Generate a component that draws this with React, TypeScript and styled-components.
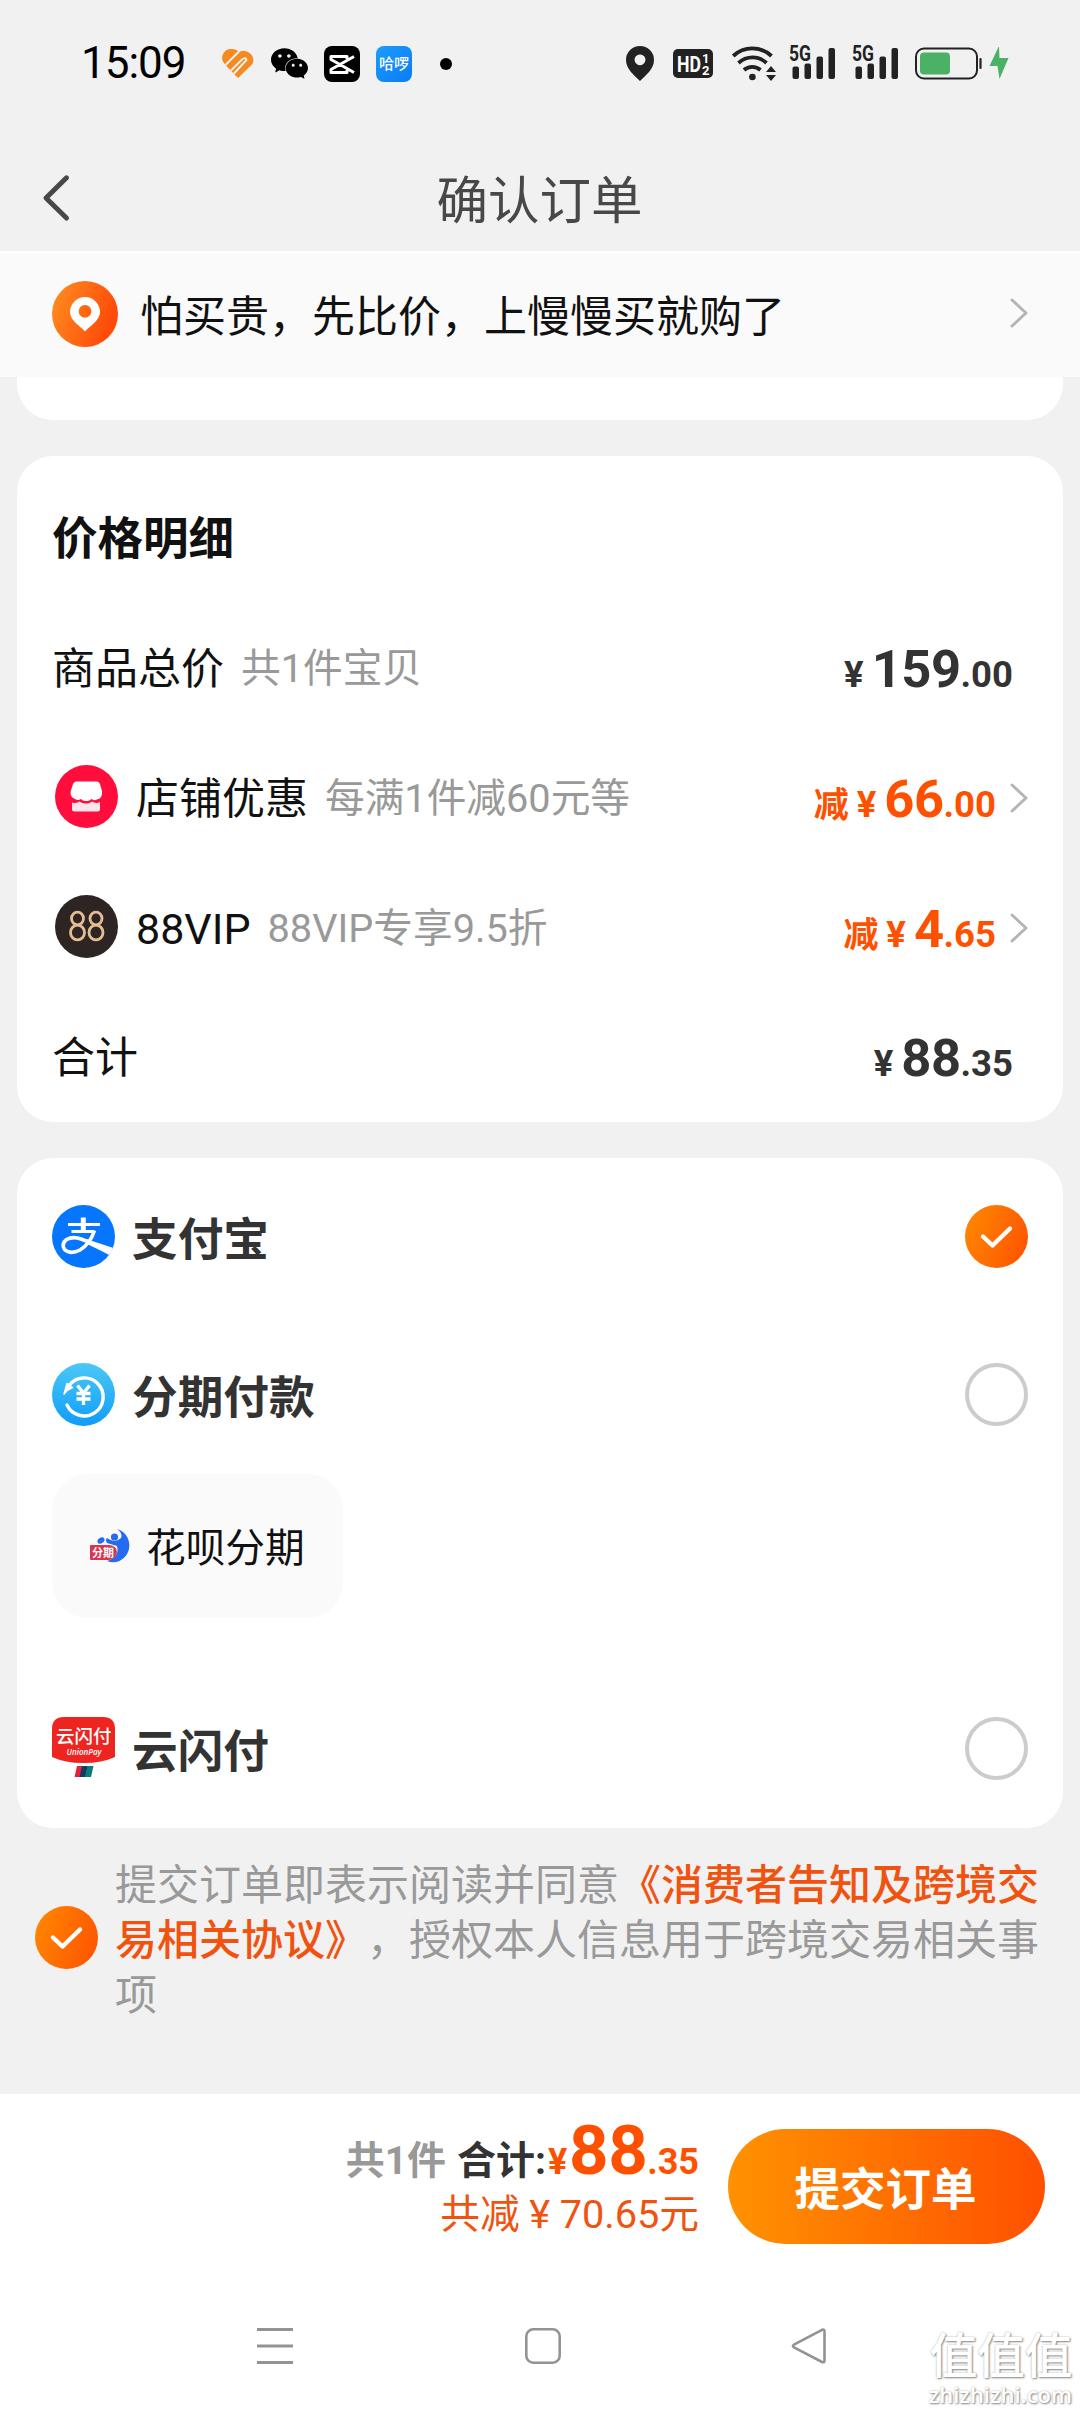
import React from "react";
import styled, { createGlobalStyle } from "styled-components";
import { SiWechat } from "react-icons/si";

const GlobalStyle = createGlobalStyle`
  * { box-sizing: border-box; }
  body {
    margin: 0;
    background: #f1f1f1;
    font-family: Roboto, "Noto Sans CJK SC", sans-serif;
    text-spacing-trim: space-all;
  }
  svg { display: block; flex: none; overflow: visible; }
`;

const Screen = styled.div`
  position: relative;
  display: flex;
  flex-direction: column;
  width: 1080px;
  height: 2412px;
  overflow: hidden;
  background: #f1f1f1;
`;

/* ---------- status bar ---------- */
const StatusBar = styled.header`
  display: flex;
  align-items: center;
  height: 129px;
  padding: 0 71px 2px 81px;
`;
const Clock = styled.span`
  width: 141px;
  padding-bottom: 1px;
  font-size: 44px;
  line-height: 50px;
  letter-spacing: -1px;
  color: #000;
`;
const StatusGroup = styled.div`
  display: flex;
  align-items: center;
  gap: 16px;
`;
const SignalGroup = styled(StatusGroup)`
  margin-left: -2px;
  gap: 17px;
`;
const RadioGroup = styled(StatusGroup)`
  gap: 19px;
`;
const Spacer = styled.div`
  flex: 1;
`;
const HelloBadge = styled.span`
  display: flex;
  align-items: center;
  justify-content: center;
  width: 36px;
  height: 36px;
  border-radius: 8px;
  background: linear-gradient(135deg, #1d9bfd, #0a7cf8);
  color: #fff;
  font-size: 15px;
  font-weight: 500;
  line-height: 20px;
`;
const Dot = styled.span`
  width: 12px;
  height: 12px;
  margin-left: 12px;
  border-radius: 50%;
  background: #000;
`;

/* ---------- navigation + banner ---------- */
const TitleBar = styled.div`
  display: flex;
  align-items: flex-start;
  height: 122px;
  padding: 0 42px;
`;
const PageTitle = styled.h1`
  flex: 1;
  margin: 0 29px 0 0;
  padding-top: 38px;
  text-align: center;
  font-size: 51.5px;
  font-weight: 400;
  line-height: 70px;
  color: #484848;
`;
const BackSlot = styled.div`
  display: flex;
  justify-content: center;
  width: 28px;
  padding-top: 46px;
`;
const Banner = styled.div`
  display: flex;
  align-items: center;
  height: 126px;
  padding: 0 52px 2px;
  border-top: 2px solid #fff;
  background: #fafafa;
`;
const BannerText = styled.span`
  flex: 1;
  padding: 6px 0 0 22px;
  font-size: 43px;
  line-height: 60px;
  color: #111;
`;

/* ---------- cards ---------- */
const CardTail = styled.div`
  height: 43px;
  margin: 0 17px 36px;
  border-radius: 0 0 36px 36px;
  background: #fff;
`;
const Card = styled.section`
  margin: 0 17px 36px;
  padding: 0 35px;
  border-radius: 36px;
  background: #fff;
`;
const CardTitle = styled.h2`
  margin: 0;
  padding: 54px 0 34px;
  font-size: 45.5px;
  font-weight: 700;
  line-height: 60px;
  color: #111;
`;
const PriceRow = styled.div`
  display: flex;
  align-items: center;
  height: 130px;
  &:last-child {
    height: 128px;
  }
`;
const RowIcon = styled.div`
  width: 63px;
  height: 63px;
  margin: 0 18px 5px 3px;
`;
const RowLabel = styled.span`
  font-size: 43px;
  line-height: 60px;
  color: #111;
`;
const RowNote = styled.span`
  margin-left: 17px;
  font-size: 39.7px;
  line-height: 60px;
  color: #999;
`;
const Price = styled.div<{ $accent?: boolean; $arrow?: boolean }>`
  display: flex;
  align-items: baseline;
  margin-left: auto;
  margin-right: ${(p) => (p.$arrow ? 14 : 15)}px;
  padding-top: 6px;
  font-size: 36.5px;
  font-weight: 700;
  line-height: 60px;
  color: ${(p) => (p.$accent ? "#ff5000" : "#333")};
`;
const Cut = styled.span`
  font-size: 35px;
`;
const Yen = styled.span<{ $w: number }>`
  width: ${(p) => p.$w}px;
  text-align: center;
`;
const Big = styled.span<{ $size: number }>`
  font-size: ${(p) => p.$size}px;
  letter-spacing: -0.5px;
`;

/* ---------- payment ---------- */
const PayRow = styled.div`
  display: flex;
  align-items: center;
  height: 157.5px;
`;
const PayIcon = styled.div`
  display: flex;
  align-items: center;
  justify-content: center;
  width: 63px;
  height: 63px;
`;
const PayName = styled.span`
  flex: 1;
  padding: 9px 0 0 17px;
  font-size: 45.7px;
  font-weight: 700;
  line-height: 60px;
  color: #333;
`;
const Radio = styled.span`
  width: 63px;
  height: 63px;
  border: 4px solid #ccc;
  border-radius: 50%;
`;
const CheckedRadio = styled.span<{ $raise?: number }>`
  display: flex;
  align-items: center;
  justify-content: center;
  flex: none;
  width: 63px;
  height: 63px;
  margin-bottom: ${(p) => p.$raise ?? 0}px;
  border-radius: 50%;
  background: linear-gradient(110deg, #ff8a00, #ff5000);
`;
const Chip = styled.div`
  display: flex;
  align-items: center;
  width: 291px;
  height: 144px;
  margin: 1px 0 52px;
  padding-left: 38px;
  border-radius: 36px;
  background: #fafafa;
`;
const ChipText = styled.span`
  padding: 6px 0 0 16px;
  font-size: 39.7px;
  line-height: 60px;
  color: #111;
`;

/* ---------- agreement ---------- */
const Agreement = styled.div`
  display: flex;
  align-items: center;
  padding-left: 35px;
`;
const AgreementText = styled.p`
  width: 926px;
  margin: -6px 0 0 17px;
  font-size: 42px;
  line-height: 55px;
  word-break: break-all;
  color: #999;
`;
const AgreementLink = styled.span`
  font-weight: 500;
  color: #f0530f;
`;

/* ---------- bottom ---------- */
const BottomBar = styled.footer`
  display: flex;
  align-items: flex-start;
  justify-content: flex-end;
  height: 318px;
  margin-top: auto;
  padding: 35px 35px 0 0;
  background: #fff;
`;
const Totals = styled.div`
  display: flex;
  flex-direction: column;
  align-items: flex-end;
  margin-right: 29px;
`;
const TotalLine = styled.div`
  display: flex;
  align-items: baseline;
  height: 72px;
  margin-top: -13px;
  font-size: 36px;
  font-weight: 700;
  line-height: 70px;
  color: #ff5000;
`;
const TotalText = styled.span<{ $muted?: boolean }>`
  margin-left: ${(p) => (p.$muted ? 0 : 11)}px;
  font-size: 39px;
  color: ${(p) => (p.$muted ? "#999" : "#333")};
`;
const SavedLine = styled.div`
  display: flex;
  align-items: baseline;
  font-size: 39.7px;
  line-height: 54px;
  color: #f0530f;
`;
const SubmitButton = styled.button`
  width: 317px;
  height: 115px;
  padding: 0 2px 1px 0;
  border: 0;
  border-radius: 58px;
  background: linear-gradient(90deg, #ff9200, #ff5000);
  font-family: inherit;
  font-size: 45.5px;
  font-weight: 700;
  color: #fff;
`;
const SystemNav = styled.nav`
  display: grid;
  grid-template-columns: 36px 36px 36px;
  column-gap: 231px;
  margin-top: -84px;
  padding: 0 0 48px 257px;
`;
const Watermark = styled.div`
  position: absolute;
  right: 8px;
  bottom: 5px;
  display: flex;
  flex-direction: column;
  align-items: flex-end;
  color: #fff;
  text-shadow: 1px 1px 2px #888, 0 0 2px #bbb;
`;
const WatermarkName = styled.span`
  font-size: 48px;
  font-weight: 500;
  line-height: 48px;
  letter-spacing: -0.5px;
`;
const WatermarkSite = styled.span`
  font-family: "Open Sans", sans-serif;
  font-size: 22px;
  font-weight: 600;
  line-height: 26px;
`;

/* ---------- drawings ---------- */
const HeartIcon = () => (
  <svg width="33" height="30" viewBox="0 0 33 30">
    <defs>
      <clipPath id="heart">
        <path d="M16 29 L3 15.5 A9 9 0 0 1 10 0 C13 0 15 1 17 3.2 A9.5 9.5 0 0 1 30.5 15 Z" />
      </clipPath>
    </defs>
    <g clipPath="url(#heart)">
      <rect width="33" height="29" fill="#f58a1f" />
      <path d="M2 17.5 L17.5 2" stroke="#f1f1f1" strokeWidth="2" />
      <path d="M7.500 23 L20 10.500 Q24 7.500 24.500 11 L12 24.500" fill="none" stroke="#f1f1f1" strokeWidth="1.900" />
    </g>
  </svg>
);
const CutIcon = () => (
  <svg width="36" height="36" viewBox="0 0 36 36">
    <rect width="36" height="36" rx="8" fill="#000" />
    <path d="M30 10.500 L7 23.500 V26.500 H23 V24 M30 26.500 L7 13.500 V10.500 H23 V13" fill="none" stroke="#fff" strokeWidth="3" strokeLinejoin="round" />
  </svg>
);
const PinIcon = () => (
  <svg width="28" height="35" viewBox="0 0 28 35">
    <path fillRule="evenodd" fill="#222" d="M14 0 A14 14 0 0 1 28 14 C28 23 20 29 14 35 C8 29 0 23 0 14 A14 14 0 0 1 14 0 Z M14 8.4 a5.4 5.4 0 1 0 .01 0 Z" />
  </svg>
);
const HdIcon = () => (
  <svg width="40" height="29" viewBox="0 0 40 29" fontFamily="Roboto" fontWeight="700" fill="#fff">
    <rect width="40" height="29" rx="5" fill="#222" />
    <text x="4" y="22.5" fontSize="22" textLength="24" lengthAdjust="spacingAndGlyphs">HD</text>
    <text x="29" y="13.5" fontSize="13">1</text>
    <text x="29" y="25.5" fontSize="13">2</text>
  </svg>
);
const WifiIcon = () => (
  <svg width="44" height="36" viewBox="0 0 44 36">
    <g fill="none" stroke="#222" strokeWidth="3.8">
      <path d="M1.2 10 A28 28 0 0 1 39.5 10" />
      <path d="M6.5 17 A20.5 20.5 0 0 1 34.5 17" />
      <path d="M12 24 A12.5 12.5 0 0 1 28.5 24" />
    </g>
    <circle cx="20.4" cy="31" r="3.3" fill="#222" />
    <path d="M39 20 L44 26 H34 Z M39 35 L34 29 H44 Z" fill="#222" />
  </svg>
);
const SignalIcon = () => (
  <svg width="46" height="35" viewBox="1 0 46 35" fill="#222">
    <text x="0" y="15" fontFamily="Roboto" fontWeight="700" fontSize="21.500" textLength="22" lengthAdjust="spacingAndGlyphs">5G</text>
    <rect x="3.5" y="20.500" width="6.5" height="12.500" rx="2" />
    <rect x="15.5" y="17.500" width="6.5" height="15.500" rx="2" />
    <rect x="27.5" y="10.500" width="6.5" height="22.500" rx="2" />
    <rect x="39.5" y="2" width="6.5" height="31" rx="2" />
  </svg>
);
const BatteryIcon = () => (
  <svg width="94" height="33" viewBox="0 0 94 33">
    <rect x="1" y="1.5" width="61" height="30" rx="8" fill="none" stroke="#222" strokeWidth="2" />
    <rect x="5" y="5.5" width="30" height="22" rx="4" fill="#4bb164" />
    <rect x="64.4" y="11" width="2.2" height="11" rx="1" fill="#222" />
    <path d="M83.5 0 L74.5 19 H82.5 L84.5 32 L93.5 11 H84.500 L84 0 Z" fill="#4bb164" />
  </svg>
);
const BackIcon = () => (
  <svg width="26" height="46" viewBox="0 0 26 46">
    <path d="M23.500 2.8 L3 23 L23.500 43" fill="none" stroke="#484848" strokeWidth="5" strokeLinecap="round" strokeLinejoin="round" />
  </svg>
);
const Chevron = () => (
  <svg width="18" height="32" viewBox="0 0 18 32">
    <path d="M2 2 L16 15 L2 28" fill="none" stroke="#b5b5b5" strokeWidth="3" strokeLinecap="round" strokeLinejoin="round" />
  </svg>
);
const BannerIcon = () => (
  <svg width="66" height="66" viewBox="0 0 66 66">
    <defs>
      <linearGradient id="banner" x1="0" y1="0" x2="1" y2="0.35">
        <stop offset="0" stopColor="#ff9022" />
        <stop offset="1" stopColor="#ff4a08" />
      </linearGradient>
    </defs>
    <circle cx="33" cy="33" r="33" fill="url(#banner)" />
    <path fillRule="evenodd" fill="#fff" d="M33 16 A15 15 0 0 1 48 31 C48 39 40 43 33 50.5 C26 43 18 39 18 31 A15 15 0 0 1 33 16 Z M33 24 a6.3 6.3 0 1 0 .01 0 Z" />
  </svg>
);
const ShopIcon = () => (
  <svg width="63" height="63" viewBox="0 0 63 63">
    <circle cx="31.5" cy="31.5" r="31.5" fill="#ff0d3d" />
    <path d="M21 16.5 H42 Q44 16.5 45 19 L47 26 Q48 33 42 34.5 Q39 36 36.5 34 Q34 36.5 31.5 36 Q28 36.5 26 34 Q23 36 20 34 Q14.500 32 15.800 26 L18 19 Q19 16.500 21 16.500 Z" fill="#fff" />
    <path d="M17 37.500 Q20 39 24.500 36.500 Q27.500 39 31 38.500 Q34.500 39 37 36.500 Q41 39 45 37 V44 Q45 46.500 42.500 46.500 H19.500 Q17 46.500 17 44 Z" fill="#ffe3ea" />
  </svg>
);
const VipIcon = () => (
  <svg width="63" height="63" viewBox="0 0 63 63">
    <circle cx="31.5" cy="31.5" r="31.5" fill="#2c2523" />
    <g fill="none" stroke="#e6bd92" strokeWidth="2.800">
      <ellipse cx="22.500" cy="23.500" rx="6" ry="6.400" />
      <ellipse cx="22.500" cy="37.500" rx="7" ry="7.300" />
      <ellipse cx="41" cy="23.500" rx="6" ry="6.400" />
      <ellipse cx="41" cy="37.500" rx="7" ry="7.300" />
    </g>
  </svg>
);
const AlipayIcon = () => (
  <svg width="63" height="63" viewBox="0 0 63 63">
    <defs>
      <clipPath id="alipay"><circle cx="31.5" cy="31.5" r="31.5" /></clipPath>
    </defs>
    <g clipPath="url(#alipay)">
      <rect width="63" height="63" fill="#0776fe" />
      <path d="M16 19.500 H48 M19.500 26.500 H42" stroke="#fff" strokeWidth="2.800" />
      <path d="M31.300 12.500 V26.500" stroke="#fff" strokeWidth="5" />
      <path d="M42.500 25.500 Q38 39 28 45 Q18.500 50 12.500 44.500 Q9 39 14.500 34.500 Q21 31 29 34 Q40 38 60 47" fill="none" stroke="#fff" strokeWidth="3.600" />
      <path d="M34 34 L63 43.500 L60 51.500 Q46 44 34 38.500 Z" fill="#fff" />
    </g>
  </svg>
);
const InstallmentIcon = () => (
  <svg width="63" height="63" viewBox="0 0 63 63">
    <defs>
      <linearGradient id="inst" x1="0" y1="0" x2="0" y2="1">
        <stop offset="0" stopColor="#4cc8f5" />
        <stop offset="1" stopColor="#0f9dfa" />
      </linearGradient>
    </defs>
    <circle cx="31.5" cy="31.5" r="31.5" fill="url(#inst)" />
    <path d="M17 22.500 A19 19 0 1 1 15 42" fill="none" stroke="#fff" strokeWidth="3.400" strokeLinecap="round" />
    <path d="M12 31 L15 20.500 L20.500 24.500 Q16 26 12 31 Z" fill="#fff" stroke="#fff" strokeLinejoin="round" strokeWidth="1.500" />
    <path d="M25.500 22.500 L31.500 30 L37.500 22.500 M24.500 30.500 H38.500 M24.500 36 H38.500 M31.500 30 V42" fill="none" stroke="#fff" strokeWidth="3.300" />
  </svg>
);
const HuabeiIcon = () => (
  <svg width="40" height="34" viewBox="0 0 40 34">
    <path d="M27 0 A17 17 0 0 1 38 23 A16 16 0 0 1 17 32 Q30 28 27 17 L17 14 Q15 11 17 9 Q25 15 31 9 Q33 4 27 0 Z" fill="#246bf2" />
    <circle cx="24.500" cy="8" r="3.600" fill="#246bf2" />
    <ellipse cx="11" cy="11.500" rx="3.800" ry="2.800" transform="rotate(-35 11 11.500)" fill="#246bf2" />
    <path d="M0 17 Q0 16 1 16 H19 Q27 17 27 23 Q26 30 19 31 H1 Q0 31 0 30 Z" fill="#d93550" />
    <text x="2" y="28" fontFamily="Noto Sans CJK SC" fontSize="11" fontWeight="700" fill="#fff">分期</text>
  </svg>
);
const UnionPayIcon = () => (
  <svg width="63" height="64" viewBox="0 0 63 64">
    <path d="M0 12 Q0 0 12 0 H51 Q63 0 63 12 V40 Q50 46 31.500 46 Q13 46 0 40 Z" fill="#ee2420" />
    <text x="4" y="26" fontFamily="Noto Sans CJK SC" fontSize="18.500" fontWeight="500" fill="#fff">云闪付</text>
    <text x="14.500" y="38" fontFamily="Open Sans" fontSize="9" fontStyle="italic" fontWeight="600" fill="#fff" textLength="35" lengthAdjust="spacingAndGlyphs">UnionPay</text>
    <path d="M25 49 H31 L28.500 60 H22.500 Z" fill="#e0243a" />
    <path d="M30 49 H36 L33.500 60 H27.500 Z" fill="#123a63" />
    <path d="M35.500 49 H41.500 L39 60 H33 Z" fill="#0d7b78" />
  </svg>
);
const CheckIcon = () => (
  <svg width="34" height="26" viewBox="0 0 34 26">
    <path d="M3 12.500 L12.500 21.500 L30 4.500" fill="none" stroke="#fff" strokeWidth="4.400" strokeLinecap="round" strokeLinejoin="round" />
  </svg>
);

type AmountProps = { whole: string; cents: string; cut?: boolean };
const Amount = ({ whole, cents, cut }: AmountProps) => (
  <Price $accent={cut} $arrow={cut}>
    {cut && <Cut>减</Cut>}
    <Yen $w={35.5}>¥</Yen>
    <Big $size={52.5}>{whole}</Big>
    <span>{cents}</span>
  </Price>
);

export default function App() {
  return (
    <Screen>
      <GlobalStyle />
      <StatusBar>
        <Clock>15:09</Clock>
        <StatusGroup>
          <HeartIcon />
          <SiWechat size={37} color="#000" />
          <CutIcon />
          <HelloBadge>哈啰</HelloBadge>
          <Dot />
        </StatusGroup>
        <Spacer />
        <StatusGroup>
          <RadioGroup>
            <PinIcon />
            <HdIcon />
            <WifiIcon />
          </RadioGroup>
          <SignalGroup>
            <SignalIcon />
            <SignalIcon />
          </SignalGroup>
          <BatteryIcon />
        </StatusGroup>
      </StatusBar>
      <TitleBar>
        <BackSlot><BackIcon /></BackSlot>
        <PageTitle>确认订单</PageTitle>
      </TitleBar>
      <Banner>
        <BannerIcon />
        <BannerText>怕买贵，先比价，上慢慢买就购了</BannerText>
        <Chevron />
      </Banner>
      <CardTail />

      <Card>
        <CardTitle>价格明细</CardTitle>
        <PriceRow>
          <RowLabel>商品总价</RowLabel>
          <RowNote>共1件宝贝</RowNote>
          <Amount whole="159" cents=".00" />
        </PriceRow>
        <PriceRow>
          <RowIcon><ShopIcon /></RowIcon>
          <RowLabel>店铺优惠</RowLabel>
          <RowNote>每满1件减60元等</RowNote>
          <Amount cut whole="66" cents=".00" />
          <Chevron />
        </PriceRow>
        <PriceRow>
          <RowIcon><VipIcon /></RowIcon>
          <RowLabel>88VIP</RowLabel>
          <RowNote>88VIP专享9.5折</RowNote>
          <Amount cut whole="4" cents=".65" />
          <Chevron />
        </PriceRow>
        <PriceRow>
          <RowLabel>合计</RowLabel>
          <Amount whole="88" cents=".35" />
        </PriceRow>
      </Card>

      <Card>
        <PayRow>
          <PayIcon><AlipayIcon /></PayIcon>
          <PayName>支付宝</PayName>
          <CheckedRadio><CheckIcon /></CheckedRadio>
        </PayRow>
        <PayRow>
          <PayIcon><InstallmentIcon /></PayIcon>
          <PayName>分期付款</PayName>
          <Radio />
        </PayRow>
        <Chip>
          <HuabeiIcon />
          <ChipText>花呗分期</ChipText>
        </Chip>
        <PayRow>
          <PayIcon><UnionPayIcon /></PayIcon>
          <PayName>云闪付</PayName>
          <Radio />
        </PayRow>
      </Card>

      <Agreement>
        <CheckedRadio $raise={11}><CheckIcon /></CheckedRadio>
        <AgreementText>
          提交订单即表示阅读并同意<AgreementLink>《消费者告知及跨境交易相关协议》</AgreementLink>，授权本人信息用于跨境交易相关事项
        </AgreementText>
      </Agreement>

      <BottomBar>
        <Totals>
          <TotalLine>
            <TotalText $muted>共1件</TotalText>
            <TotalText>合计:</TotalText>
            <Yen $w={23}>¥</Yen>
            <Big $size={69}>88</Big>
            <span>.35</span>
          </TotalLine>
          <SavedLine>
            共减<Yen $w={40}>¥</Yen>70.65元
          </SavedLine>
        </Totals>
        <SubmitButton>提交订单</SubmitButton>
      </BottomBar>
      <SystemNav>
        <svg width="36" height="36" viewBox="0 0 36 36">
          <path d="M0 1.500 H36 M0 18 H36 M0 34.500 H36" stroke="#939393" strokeWidth="3" />
        </svg>
        <svg width="36" height="36" viewBox="-1 0 36 36">
          <rect x="1.300" y="1.300" width="33.400" height="33.400" rx="7" fill="none" stroke="#939393" strokeWidth="2.600" />
        </svg>
        <svg width="36" height="36" viewBox="0 0 36 36">
          <path d="M31 1.800 L3 16.500 Q0.800 18 3 19.500 L31 34 Q33.500 35 33.500 32.500 V3.500 Q33.500 1 31 1.800 Z" fill="none" stroke="#939393" strokeWidth="2.600" />
        </svg>
      </SystemNav>
      <Watermark>
        <WatermarkName>值值值</WatermarkName>
        <WatermarkSite>zhizhizhi.com</WatermarkSite>
      </Watermark>
    </Screen>
  );
}
